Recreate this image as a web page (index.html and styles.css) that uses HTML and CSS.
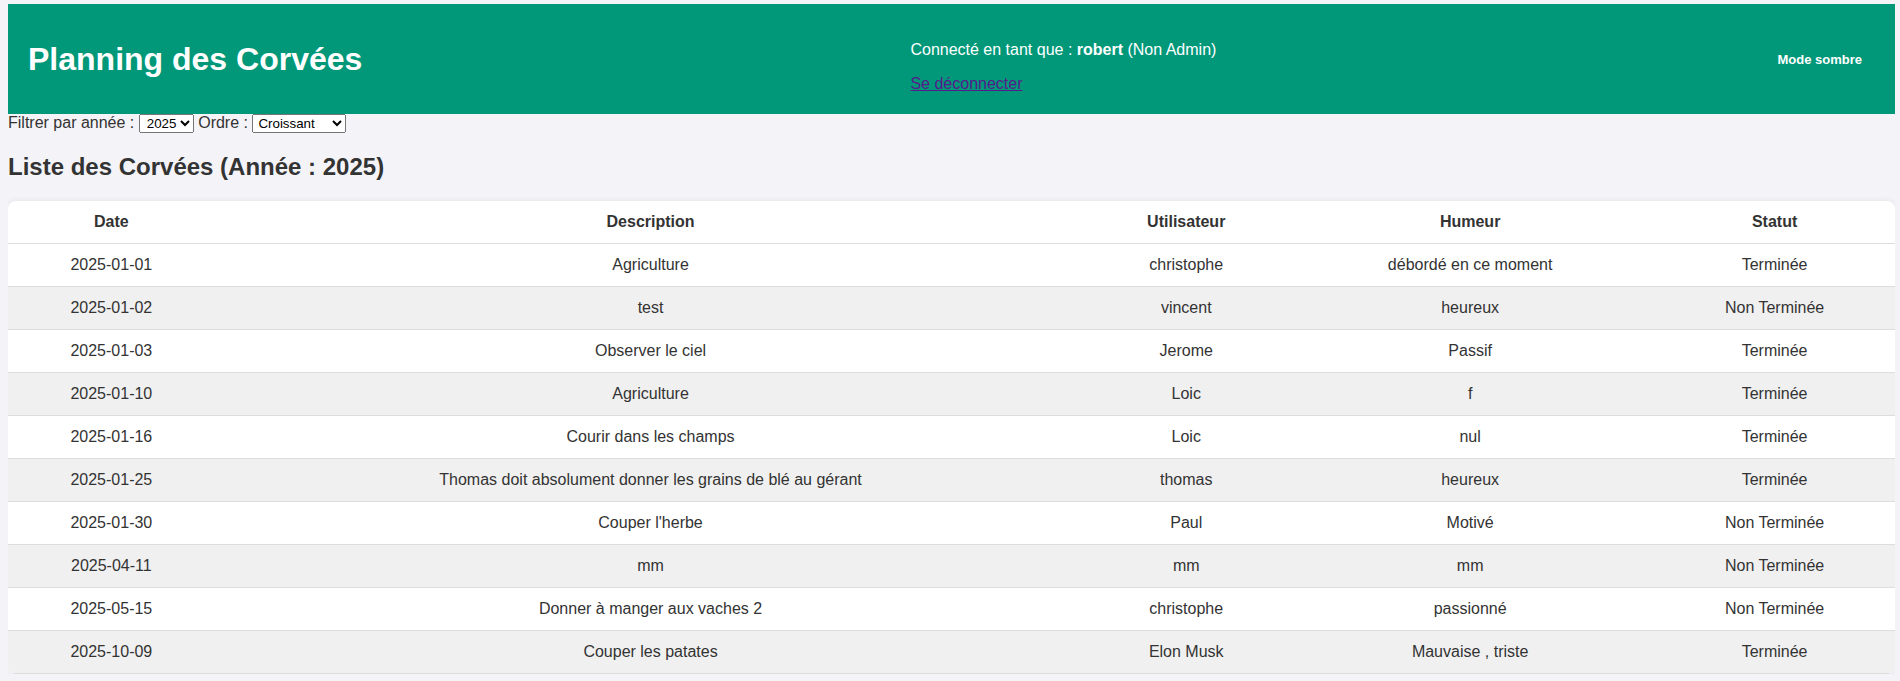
FILE: index.html
```html
<!DOCTYPE html>
<html lang="fr">
<head>
<meta charset="utf-8">
<title>Planning des Corvées</title>
<link rel="stylesheet" href="styles.css">
</head>
<body>
<header class="topbar">
  <h1 class="title">Planning des Corvées</h1>
  <div class="user-info">
    <p class="user-line">Connecté en tant que : <strong>robert</strong> (Non Admin)</p>
    <p class="logout-line"><a class="logout" href="#">Se déconnecter</a></p>
  </div>
  <button class="mode-btn" type="button">Mode sombre</button>
</header>
<form class="filters">
  <label>Filtrer par année :</label>
  <select class="sel sel-year"><option>2025</option><option>2024</option></select>
  <label>Ordre :</label>
  <select class="sel sel-order"><option>Croissant</option><option>Décroissant</option></select>
</form>
<h2 class="list-title">Liste des Corvées (Année : 2025)</h2>
<table class="chores">
  <thead>
    <tr><th>Date</th><th>Description</th><th>Utilisateur</th><th>Humeur</th><th>Statut</th></tr>
  </thead>
  <tbody>
    <tr><td>2025-01-01</td><td>Agriculture</td><td>christophe</td><td>débordé en ce moment</td><td>Terminée</td></tr>
    <tr><td>2025-01-02</td><td>test</td><td>vincent</td><td>heureux</td><td>Non Terminée</td></tr>
    <tr><td>2025-01-03</td><td>Observer le ciel</td><td>Jerome</td><td>Passif</td><td>Terminée</td></tr>
    <tr><td>2025-01-10</td><td>Agriculture</td><td>Loic</td><td>f</td><td>Terminée</td></tr>
    <tr><td>2025-01-16</td><td>Courir dans les champs</td><td>Loic</td><td>nul</td><td>Terminée</td></tr>
    <tr><td>2025-01-25</td><td>Thomas doit absolument donner les grains de blé au gérant</td><td>thomas</td><td>heureux</td><td>Terminée</td></tr>
    <tr><td>2025-01-30</td><td>Couper l'herbe</td><td>Paul</td><td>Motivé</td><td>Non Terminée</td></tr>
    <tr><td>2025-04-11</td><td>mm</td><td>mm</td><td>mm</td><td>Non Terminée</td></tr>
    <tr><td>2025-05-15</td><td>Donner à manger aux vaches 2</td><td>christophe</td><td>passionné</td><td>Non Terminée</td></tr>
    <tr><td>2025-10-09</td><td>Couper les patates</td><td>Elon Musk</td><td>Mauvaise , triste</td><td>Terminée</td></tr>
  </tbody>
</table>
</body>
</html>
```
FILE: styles.css
```css
html, body {
  background: #f4f4f8;
}
body {
  margin: 4px 5px 0 8px;
  font-family: "Liberation Sans", Arial, sans-serif;
  font-size: 16px;
  color: #333;
}
.topbar {
  display: flex;
  justify-content: space-between;
  align-items: center;
  height: 110px;
  box-sizing: border-box;
  padding: 0 20px;
  background: #009879;
  color: #fff;
}
.title {
  margin: 0;
  font-size: 32px;
  font-weight: bold;
}
.user-info p {
  margin: 16px 0 0 0;
}
.user-info .logout-line {
  margin-bottom: 0;
}
.logout {
  color: #551a8b;
}
.mode-btn {
  background: transparent;
  border: none;
  color: #fff;
  font-family: "Liberation Sans", Arial, sans-serif;
  font-size: 13px;
  font-weight: bold;
  padding: 8px 13px;
}
.filters {
  margin: 0;
}
.sel {
  font-family: "Liberation Sans", Arial, sans-serif;
  font-size: 13.33px;
  color: #000;
  padding-left: 3px;
}
.sel-order {
  padding-left: 1px;
}
.list-title {
  font-size: 24px;
  margin: 20px 0 20px;
}
.chores {
  width: 100%;
  border-collapse: collapse;
  background: #fff;
  border-radius: 8px;
  overflow: hidden;
  box-shadow: 0 0 6px rgba(0, 0, 0, 0.08);
}
.chores th, .chores td {
  padding: 12px;
  text-align: center;
  border-bottom: 1px solid #ddd;
  line-height: 18px;
}
.chores th {
  font-weight: bold;
}
.chores tbody tr:nth-child(even) {
  background: #f0f0f0;
}
```
